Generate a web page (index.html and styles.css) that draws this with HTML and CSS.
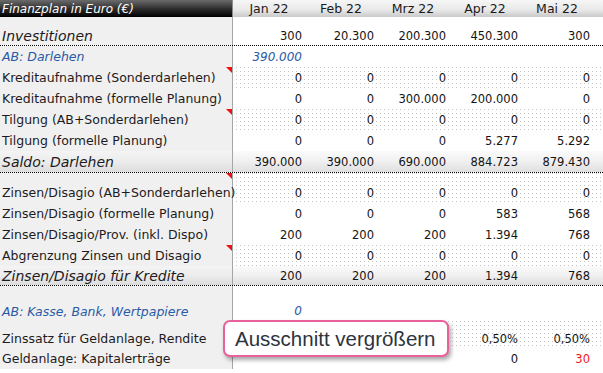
FILE: index.html
```html
<!DOCTYPE html>
<html lang="de">
<head>
<meta charset="utf-8">
<title>Finanzplan</title>
<link rel="stylesheet" href="styles.css">
</head>
<body>
<div class="sheet">
  <div class="row head">
    <div class="label">Finanzplan in Euro (€)</div>
    <div class="cell">Jan 22</div><div class="cell">Feb 22</div><div class="cell">Mrz 22</div><div class="cell">Apr 22</div><div class="cell">Mai 22</div><div class="rest"></div>
  </div>
  <div class="row big sep h28">
    <div class="label">Investitionen</div>
    <div class="cell">300</div><div class="cell">20.300</div><div class="cell">200.300</div><div class="cell">450.300</div><div class="cell">300</div><div class="rest"></div>
  </div>
  <div class="row ab">
    <div class="label">AB: Darlehen</div>
    <div class="cell">390.000</div><div class="cell"></div><div class="cell"></div><div class="cell"></div><div class="cell"></div><div class="rest"></div>
  </div>
  <div class="row dots">
    <div class="label note">Kreditaufnahme (Sonderdarlehen)</div>
    <div class="cell">0</div><div class="cell">0</div><div class="cell">0</div><div class="cell">0</div><div class="cell">0</div><div class="rest"></div>
  </div>
  <div class="row">
    <div class="label">Kreditaufnahme (formelle Planung)</div>
    <div class="cell">0</div><div class="cell">0</div><div class="cell">300.000</div><div class="cell">200.000</div><div class="cell">0</div><div class="rest"></div>
  </div>
  <div class="row dots">
    <div class="label note">Tilgung (AB+Sonderdarlehen)</div>
    <div class="cell">0</div><div class="cell">0</div><div class="cell">0</div><div class="cell">0</div><div class="cell">0</div><div class="rest"></div>
  </div>
  <div class="row">
    <div class="label">Tilgung (formelle Planung)</div>
    <div class="cell">0</div><div class="cell">0</div><div class="cell">0</div><div class="cell">5.277</div><div class="cell">5.292</div><div class="rest"></div>
  </div>
  <div class="row big sum sep">
    <div class="label">Saldo: Darlehen</div>
    <div class="cell">390.000</div><div class="cell">390.000</div><div class="cell">690.000</div><div class="cell">884.723</div><div class="cell">879.430</div><div class="rest"></div>
  </div>
  <div class="row dots tall">
    <div class="label note">Zinsen/Disagio (AB+Sonderdarlehen)</div>
    <div class="cell">0</div><div class="cell">0</div><div class="cell">0</div><div class="cell">0</div><div class="cell">0</div><div class="rest"></div>
  </div>
  <div class="row">
    <div class="label">Zinsen/Disagio (formelle Planung)</div>
    <div class="cell">0</div><div class="cell">0</div><div class="cell">0</div><div class="cell">583</div><div class="cell">568</div><div class="rest"></div>
  </div>
  <div class="row">
    <div class="label">Zinsen/Disagio/Prov. (inkl. Dispo)</div>
    <div class="cell">200</div><div class="cell">200</div><div class="cell">200</div><div class="cell">1.394</div><div class="cell">768</div><div class="rest"></div>
  </div>
  <div class="row dots">
    <div class="label note">Abgrenzung Zinsen und Disagio</div>
    <div class="cell">0</div><div class="cell">0</div><div class="cell">0</div><div class="cell">0</div><div class="cell">0</div><div class="rest"></div>
  </div>
  <div class="row big sum sep h19">
    <div class="label">Zinsen/Disagio für Kredite</div>
    <div class="cell">200</div><div class="cell">200</div><div class="cell">200</div><div class="cell">1.394</div><div class="cell">768</div><div class="rest"></div>
  </div>
  <div class="row blank">
    <div class="label"></div><div class="cell"></div><div class="cell"></div><div class="cell"></div><div class="cell"></div><div class="cell"></div><div class="rest"></div>
  </div>
  <div class="row ab h20">
    <div class="label">AB: Kasse, Bank, Wertpapiere</div>
    <div class="cell">0</div><div class="cell"></div><div class="cell"></div><div class="cell"></div><div class="cell"></div><div class="rest"></div>
  </div>
  <div class="row dots tall2">
    <div class="label">Zinssatz für Geldanlage, Rendite</div>
    <div class="cell"></div><div class="cell"></div><div class="cell"></div><div class="cell">0,50%</div><div class="cell">0,50%</div><div class="rest"></div>
  </div>
  <div class="row">
    <div class="label">Geldanlage: Kapitalerträge</div>
    <div class="cell"></div><div class="cell"></div><div class="cell"></div><div class="cell">0</div><div class="cell red">30</div><div class="rest"></div>
  </div>
</div>
<div class="tip">Ausschnitt vergrößern</div>
</body>
</html>
```
FILE: styles.css
```css
html, body {
  margin: 0;
  padding: 0;
  background: #ffffff;
  overflow: hidden;
}
body {
  width: 603px;
  height: 373px;
  position: relative;
  font-family: "DejaVu Sans", sans-serif;
  font-size: 12.5px;
  color: #1d1a22;
}
.sheet {
  display: flex;
  flex-direction: column;
}
.row {
  display: grid;
  grid-template-columns: 233px repeat(5, 72px) 1fr;
  height: 21px;
}
.row > div {
  display: flex;
  align-items: center;
  white-space: nowrap;
  overflow: visible;
}
.label {
  background: #f0f0f0;
  border-right: 1px solid #a6a6a6;
  padding-left: 2px;
  position: relative;
}
.cell {
  justify-content: flex-end;
  padding-right: 3px;
  font-size: 11.5px;
  color: #141414;
}
.head {
  height: 17px;
  background: linear-gradient(#f6f6f6 0%, #e8e8e8 60%, #c9c9c9 100%);
}
.head .label {
  background: linear-gradient(#6b6b6b 0%, #2a2a2a 55%, #000 100%);
  color: #ffffff;
  font-style: italic;
  font-size: 12px;
  border-right: 1px solid #8a8a8a;
}
.head .cell {
  justify-content: center;
  padding-right: 0;
  font-size: 12.5px;
  color: #1a1a1a;
}
.sep {
  border-bottom: 1px dotted #000;
}
.h28 { height: 28px; }
.h28 > div { align-items: flex-end; padding-bottom: 1px; }
.h28 > .cell { padding-bottom: 2px; }
.h19 { height: 19px; }
.h20 { height: 20px; }
.big .label {
  font-style: italic;
  font-size: 14px;
}
.sum {
  background: linear-gradient(#fbfbfb 0%, #f0f0f0 50%, #dedede 100%);
}
.sum .label {
  background: linear-gradient(#f4f4f4 0%, #ececec 50%, #dcdcdc 100%);
}
.ab .label, .ab .cell {
  color: #2a5aa6;
  font-style: italic;
}
.ab .cell {
  font-size: 12px;
}
.dots > .cell, .dots > .rest {
  background-color: #ffffff;
  background-image:
    linear-gradient(90deg, #ffffff 3px, transparent 3px),
    linear-gradient(#c4c4c4 1px, transparent 1px);
  background-size: 4px 4px, 4px 4px;
}
.tall { height: 30px; }
.tall > div { align-items: flex-end; padding-bottom: 3px; }
.tall2 { height: 27px; }
.tall2 > div { align-items: flex-end; padding-bottom: 2px; }
.blank { height: 15px; }
.note::after {
  content: "";
  position: absolute;
  right: 0;
  top: 0;
  border-top: 6px solid #ee1010;
  border-left: 6px solid transparent;
}
.red { color: #f01818 !important; }
.tip {
  position: absolute;
  left: 223px;
  top: 320px;
  width: 226px;
  height: 37px;
  box-sizing: border-box;
  border: 2px solid #e8619b;
  border-radius: 7px;
  background: #ffffff;
  box-shadow: 2px 3px 4px rgba(0, 0, 0, 0.35);
  font-family: "Liberation Sans", Arial, sans-serif;
  font-size: 20.5px;
  color: #2d3340;
  display: flex;
  align-items: center;
  padding-left: 10px;
}
```
